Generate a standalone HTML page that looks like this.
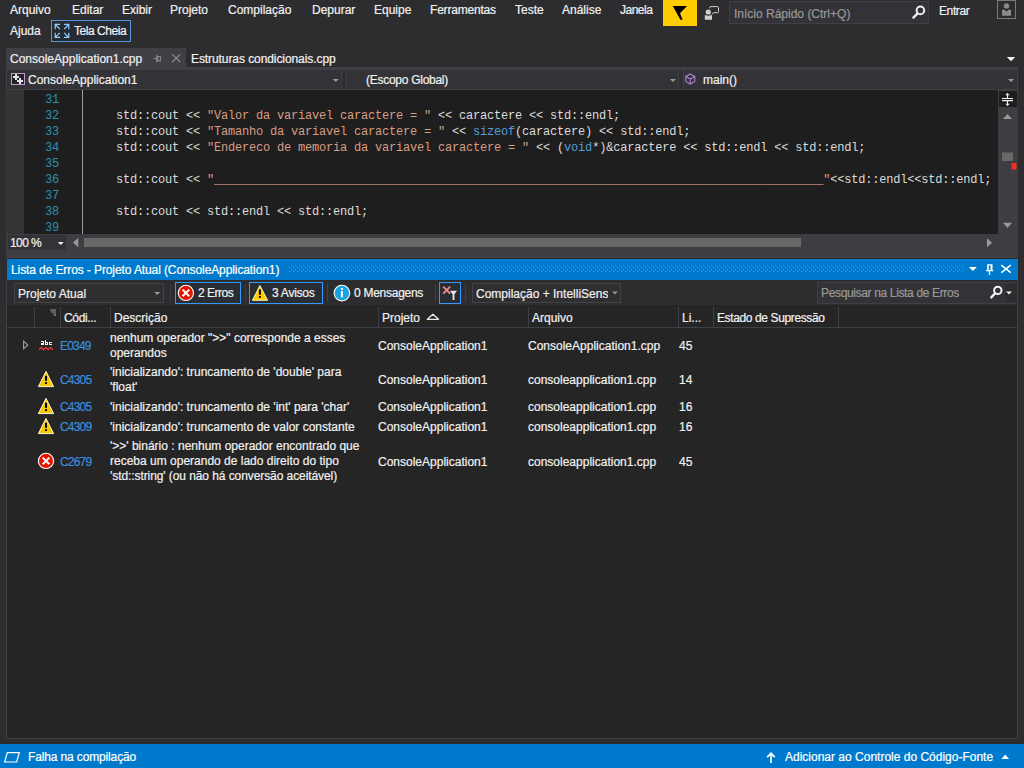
<!DOCTYPE html>
<html><head><meta charset="utf-8">
<style>
*{margin:0;padding:0;box-sizing:border-box}
html,body{width:1024px;height:768px;overflow:hidden;background:#2D2D30}
body{position:relative;font-family:"Liberation Sans",sans-serif;font-size:12px;color:#F1F1F1}
.a{position:absolute}
.t{position:absolute;white-space:nowrap;line-height:16px;height:16px;-webkit-text-stroke:0.2px currentColor}
.m{font-family:"Liberation Mono",monospace;font-size:12px;letter-spacing:-0.2px;color:#DCDCDC}
.s{color:#D69D85}
.k{color:#569CD6}
.ln{position:absolute;left:25px;width:34px;text-align:right;color:#2B91AF;font-family:"Liberation Mono",monospace;font-size:12px;letter-spacing:-0.2px;line-height:16px;white-space:nowrap}
.code{position:absolute;left:88px;white-space:pre;line-height:16px}
.sep{position:absolute;width:1px;background:#3F3F46}
.code-link{color:#3A8EDB}
</style></head>
<body>

<!-- Menu bar -->
<div class="t" style="left:10px;top:2px">Arquivo</div>
<div class="t" style="left:72px;top:2px">Editar</div>
<div class="t" style="left:122px;top:2px">Exibir</div>
<div class="t" style="left:170px;top:2px">Projeto</div>
<div class="t" style="left:228px;top:2px">Compilação</div>
<div class="t" style="left:312px;top:2px">Depurar</div>
<div class="t" style="left:374px;top:2px">Equipe</div>
<div class="t" style="left:430px;top:2px;letter-spacing:-0.2px">Ferramentas</div>
<div class="t" style="left:515px;top:2px">Teste</div>
<div class="t" style="left:562px;top:2px">Análise</div>
<div class="t" style="left:620px;top:2px;letter-spacing:-0.5px">Janela</div>
<div class="t" style="left:10px;top:23px">Ajuda</div>
<div class="a" style="left:51px;top:20px;width:80px;height:22px;border:1px solid #5597D8;background:#262B33"></div>
<svg class="a" style="left:52px;top:21px" width="20" height="20" viewBox="52 21 20 20">
<path d="M55.2 29.3 V24.4 H60.1 M55.2 24.4 L59.8 29" fill="none" stroke="#92CBFF" stroke-width="1.2"/>
<path d="M68.8 29.3 V24.4 H63.9 M68.8 24.4 L64.2 29" fill="none" stroke="#92CBFF" stroke-width="1.2"/>
<path d="M55.2 32.7 V37.4 H60.1 M55.2 37.4 L59.8 32.8" fill="none" stroke="#92CBFF" stroke-width="1.2"/>
<path d="M68.8 32.7 V37.4 H63.9 M68.8 37.4 L64.2 32.8" fill="none" stroke="#92CBFF" stroke-width="1.2"/>
</svg>
<div class="t" style="left:74px;top:23px;letter-spacing:-0.45px">Tela Cheia</div>

<!-- yellow flag -->
<div class="a" style="left:663px;top:0;width:34px;height:26px;background:#FFCC00"></div>
<svg class="a" style="left:663px;top:0" width="34" height="26" viewBox="663 0 34 26">
<path d="M672.8 6 L687 6 L680 13.2 L682.6 19.8 L680.4 19.8 Z" fill="#000"/>
</svg>
<!-- feedback icon -->
<svg class="a" style="left:703px;top:5px" width="18" height="16" viewBox="703 5 18 16">
<path d="M710.6 6.6 h7 a0.9 0.9 0 0 1 0.9 0.9 v4.3 a0.9 0.9 0 0 1 -0.9 0.9 h-4.2 l-1.8 2 v-2 h-1 a0.9 0.9 0 0 1 -0.9 -0.9 v-4.3 a0.9 0.9 0 0 1 0.9 -0.9 Z" fill="none" stroke="#D0D0D0" stroke-width="1"/>
<circle cx="708.3" cy="12" r="3.9" fill="#2D2D30"/>
<circle cx="708.3" cy="12" r="2.6" fill="#D0D0D0"/>
<path d="M704.8 15.2 h2.4 l1.1 1.2 l1.1 -1.2 h2.6 v4.6 h-7.2 Z" fill="#D0D0D0"/>
</svg>

<!-- quick launch -->
<div class="a" style="left:729px;top:1px;width:200px;height:23px;background:#333337;border:1px solid #3F3F46"></div>
<div class="t" style="left:734px;top:6px;color:#999999">Início Rápido (Ctrl+Q)</div>
<svg class="a" style="left:910px;top:4px" width="16" height="16" viewBox="910 4 16 16">
<circle cx="920.4" cy="10.4" r="3.8" fill="none" stroke="#F0F0F0" stroke-width="2"/>
<path d="M917.6 13.4 L913.4 17.6" stroke="#F0F0F0" stroke-width="2.4" stroke-linecap="round"/>
</svg>
<div class="t" style="left:939px;top:3px;letter-spacing:-0.4px">Entrar</div>
<div class="a" style="left:997px;top:0;width:19px;height:19px;border:1px solid #7A7A7A"></div>
<svg class="a" style="left:997px;top:0" width="19" height="19" viewBox="997 0 19 19">
<circle cx="1006.5" cy="5.9" r="2.7" fill="#8A8A8A"/>
<path d="M1002 9.8 h2.8 l1.7 2 l1.7 -2 h2.8 v6 h-9 Z" fill="#8A8A8A"/>
</svg>

<!-- tabs -->
<div class="a" style="left:6px;top:48px;width:180px;height:19px;background:#3F3F46"></div>
<div class="t" style="left:10px;top:51px">ConsoleApplication1.cpp</div>
<svg class="a" style="left:150px;top:52px" width="36" height="13" viewBox="150 52 36 13">
<path d="M153 58.5 h3.2 M156.6 54.8 v7.4" fill="none" stroke="#848484" stroke-width="1.2"/><path d="M157 56 h4 v5.4 h-4 Z M158.3 57.2 v3 h1.6 v-3 Z" fill="#848484" fill-rule="evenodd"/>
<path d="M172.2 54.4 L180.2 62 M180.2 54.4 L172.2 62" stroke="#8A8A8A" stroke-width="1.3"/>
</svg>
<div class="t" style="left:191px;top:51px;letter-spacing:-0.08px">Estruturas condicionais.cpp</div>
<svg class="a" style="left:1005px;top:55px" width="12" height="8" viewBox="1005 55 12 8">
<path d="M1006.8 57 L1015.2 57 L1011 61.3 Z" fill="#F1F1F1"/>
</svg>

<!-- nav bar -->
<div class="a" style="left:6px;top:67px;width:1012px;height:23px;background:#3F3F46"></div>
<div class="a" style="left:7px;top:70px;width:1010px;height:19px;background:#333337"></div>
<div class="a" style="left:341px;top:70px;width:1px;height:19px;background:#3F3F46"></div>
<div class="a" style="left:346px;top:70px;width:1px;height:19px;background:#3F3F46"></div>
<div class="a" style="left:342px;top:70px;width:4px;height:19px;background:#2F2F33"></div>
<div class="a" style="left:678px;top:70px;width:1px;height:19px;background:#3F3F46"></div>
<div class="a" style="left:683px;top:70px;width:1px;height:19px;background:#3F3F46"></div>
<div class="a" style="left:679px;top:70px;width:4px;height:19px;background:#2F2F33"></div>
<svg class="a" style="left:10px;top:72px" width="17" height="15" viewBox="10 72 17 15">
<rect x="11.5" y="73.5" width="13" height="11" fill="#232326" stroke="#C39BC6" stroke-width="1"/>
<path d="M13 76 h6 v2 h-6 Z M15 74 h2 v6 h-2 Z M17 80 h6 v2 h-6 Z M19 78 h2 v6 h-2 Z" fill="#E6E6E6"/>
</svg>
<div class="t" style="left:28px;top:72px">ConsoleApplication1</div>
<svg class="a" style="left:330px;top:77px" width="10" height="7" viewBox="330 77 10 7">
<path d="M332.8 79 L338.8 79 L335.8 82 Z" fill="#999"/>
</svg>
<div class="t" style="left:366px;top:72px;letter-spacing:-0.27px">(Escopo Global)</div>
<svg class="a" style="left:667px;top:77px" width="10" height="7" viewBox="667 77 10 7">
<path d="M670 79 L676 79 L673 82 Z" fill="#999"/>
</svg>
<svg class="a" style="left:684px;top:72px" width="13" height="14" viewBox="684 72 13 14">
<path d="M690.3 73.9 L694.8 76.4 L694.8 81.5 L690.3 84 L685.8 81.5 L685.8 76.4 Z M685.8 76.4 L690.3 79 L694.8 76.4 M690.3 79 V84" fill="none" stroke="#B180D7" stroke-width="1.1"/>
</svg>
<div class="t" style="left:703px;top:72px">main()</div>
<svg class="a" style="left:1006px;top:77px" width="10" height="7" viewBox="1006 77 10 7">
<path d="M1008 79 L1014 79 L1011 82 Z" fill="#999"/>
</svg>

<!-- editor -->
<div class="a" style="left:7px;top:90px;width:991px;height:144px;background:#1E1E1E"></div>
<div class="a" style="left:7px;top:90px;width:17px;height:144px;background:#333333"></div>
<div class="a" style="left:82px;top:90px;width:1px;height:144px;background:#9B9B9B"></div>

<!-- code -->
<div class="ln" style="top:92px">31</div>
<div class="ln" style="top:108px">32</div>
<div class="code m" style="top:108px">    std::cout &lt;&lt; <span class="s">"Valor da variavel caractere = "</span> &lt;&lt; caractere &lt;&lt; std::endl;</div>
<div class="ln" style="top:124px">33</div>
<div class="code m" style="top:124px">    std::cout &lt;&lt; <span class="s">"Tamanho da variavel caractere = "</span> &lt;&lt; <span class="k">sizeof</span>(caractere) &lt;&lt; std::endl;</div>
<div class="ln" style="top:140px">34</div>
<div class="code m" style="top:140px">    std::cout &lt;&lt; <span class="s">"Endereco de memoria da variavel caractere = "</span> &lt;&lt; (<span class="k">void</span>*)&amp;caractere &lt;&lt; std::endl &lt;&lt; std::endl;</div>
<div class="ln" style="top:156px">35</div>
<div class="ln" style="top:172px">36</div>
<div class="code m" style="top:172px">    std::cout &lt;&lt; <span class="s">"_______________________________________________________________________________________"</span>&lt;&lt;std::endl&lt;&lt;std::endl;</div>
<div class="ln" style="top:188px">37</div>
<div class="ln" style="top:204px">38</div>
<div class="code m" style="top:204px">    std::cout &lt;&lt; std::endl &lt;&lt; std::endl;</div>
<div class="ln" style="top:220px">39</div>

<!-- v scrollbar -->
<div class="a" style="left:998px;top:90px;width:20px;height:144px;background:#3E3E42"></div>
<div class="a" style="left:999px;top:91px;width:18px;height:16px;background:#1E1E1E"></div>
<svg class="a" style="left:999px;top:91px" width="18" height="16" viewBox="999 91 18 16">
<path d="M1002 98.5 h11 M1002 100.6 h11 M1007.5 93.5 v5 M1007.5 100.6 v5" stroke="#F1F1F1" stroke-width="1.1" fill="none"/>
<path d="M1005.3 95.3 L1007.5 93 L1009.7 95.3 Z M1005.3 103.7 L1007.5 106 L1009.7 103.7 Z" fill="#F1F1F1"/>
</svg>
<svg class="a" style="left:998px;top:108px" width="20" height="126" viewBox="998 108 20 126">
<path d="M1003 119 L1012 119 L1007.5 114 Z" fill="#999999"/>
<rect x="1002" y="152.5" width="11" height="8.5" fill="#686868"/>
<rect x="1011.5" y="163" width="5" height="6.5" fill="#F2301C"/>
<path d="M1003 222.8 L1012 222.8 L1007.5 228 Z" fill="#999999"/>
</svg>

<!-- h scroll -->
<div class="a" style="left:7px;top:234px;width:1011px;height:24px;background:#3E3E42"></div>
<div class="a" style="left:8px;top:235px;width:58px;height:15px;background:#333337"></div>
<div class="t" style="left:10px;top:235px;letter-spacing:-0.6px">100 %</div>
<svg class="a" style="left:56px;top:240px" width="10" height="7" viewBox="56 240 10 7">
<path d="M57.8 242 L63.8 242 L60.8 245 Z" fill="#F1F1F1"/>
</svg>
<svg class="a" style="left:70px;top:236px" width="10" height="13" viewBox="70 236 10 13">
<path d="M78.3 238 L78.3 247.3 L72.8 242.6 Z" fill="#999999"/>
</svg>
<div class="a" style="left:84px;top:238px;width:717px;height:9px;background:#686868"></div>
<svg class="a" style="left:985px;top:236px" width="10" height="13" viewBox="985 236 10 13">
<path d="M987 238.3 L987 247.3 L992 242.8 Z" fill="#999999"/>
</svg>

<div class="a" style="left:6px;top:90px;width:1px;height:169px;background:#3A3A3E"></div>
<div class="a" style="left:1017px;top:90px;width:1px;height:169px;background:#3A3A3E"></div>
<!-- error list title -->
<div class="a" style="left:7px;top:259px;width:1011px;height:21px;background:#007ACC"></div>
<div class="t" style="left:11px;top:262px;color:#fff;letter-spacing:-0.1px">Lista de Erros - Projeto Atual (ConsoleApplication1)</div>
<svg class="a" style="left:288px;top:263px" width="676" height="10" viewBox="288 263 676 10">
<defs><pattern id="grip" x="289" y="267" width="4" height="4" patternUnits="userSpaceOnUse">
<rect x="0" y="0" width="1" height="1" fill="#3A97DC"/><rect x="2" y="2" width="1" height="1" fill="#3A97DC"/></pattern></defs>
<rect x="288" y="264" width="676" height="8" fill="url(#grip)"/>
</svg>
<svg class="a" style="left:966px;top:262px" width="50" height="15" viewBox="966 262 50 15">
<path d="M968.9 267 L976.9 267 L972.9 271 Z" fill="#fff"/>
<path d="M987.2 264.2 h5.3 v6.2 h-5.3 Z M988.8 265.6 v4.8 h1.7 v-4.8 Z" fill="#fff" fill-rule="evenodd"/>
<path d="M986 270.6 h7.2 M989.5 271 v4" stroke="#fff" stroke-width="1.2"/>
<path d="M1001.3 265.2 L1010.7 272.6 M1010.7 265.2 L1001.3 272.6" stroke="#fff" stroke-width="1.5"/>
</svg>

<!-- toolbar -->
<div class="a" style="left:7px;top:280px;width:1010px;height:25px;background:#2D2D30"></div>
<div class="a" style="left:14px;top:283px;width:150px;height:20px;background:#2F2F32;border:1px solid #434346"></div>
<div class="t" style="left:18px;top:286px">Projeto Atual</div>
<svg class="a" style="left:150px;top:290px" width="10" height="6" viewBox="150 290 10 6">
<path d="M154.2 292 L160.2 292 L157.2 295 Z" fill="#999"/>
</svg>
<div class="a" style="left:170px;top:284px;width:1px;height:18px;background:#3F3F46"></div>
<div class="a" style="left:175px;top:282px;width:66px;height:22px;border:1px solid #3399FF;background:#2A2D33"></div>
<svg class="a" style="left:177px;top:284px" width="18" height="18" viewBox="177 284 18 18">
<circle cx="185.9" cy="292.9" r="7.6" fill="#E51400" stroke="#fff" stroke-width="1.1"/>
<path d="M182.6 289.6 L189.2 296.2 M189.2 289.6 L182.6 296.2" stroke="#fff" stroke-width="2"/>
</svg>
<div class="t" style="left:198px;top:285px;letter-spacing:-0.5px">2 Erros</div>
<div class="a" style="left:245px;top:284px;width:1px;height:18px;background:#3F3F46"></div>
<div class="a" style="left:249px;top:282px;width:74px;height:22px;border:1px solid #3399FF;background:#2A2D33"></div>
<svg class="a" style="left:251px;top:284px" width="18" height="18" viewBox="251 284 18 18">
<path d="M259.9 285.6 L267.6 300.3 L252.4 300.3 Z" fill="#FFCC00" stroke="#FFF6C0" stroke-width="1" stroke-linejoin="round"/>
<rect x="258.9" y="289.4" width="2" height="5.4" fill="#000"/>
<rect x="258.9" y="296" width="2" height="1.8" fill="#000"/>
</svg>
<div class="t" style="left:272px;top:285px;letter-spacing:-0.25px">3 Avisos</div>
<div class="a" style="left:327px;top:284px;width:1px;height:18px;background:#3F3F46"></div>
<svg class="a" style="left:332px;top:284px" width="20" height="18" viewBox="332 284 20 18">
<circle cx="341.9" cy="293.1" r="7.8" fill="#1BA1E2" stroke="#fff" stroke-width="1.1"/>
<rect x="340.9" y="291" width="2" height="6.3" fill="#fff"/>
<rect x="340.9" y="288" width="2" height="1.9" fill="#fff"/>
</svg>
<div class="t" style="left:354px;top:285px;letter-spacing:-0.27px">0 Mensagens</div>
<div class="a" style="left:435px;top:284px;width:1px;height:18px;background:#3F3F46"></div>
<div class="a" style="left:439px;top:282px;width:22px;height:22px;border:1px solid #3399FF;background:#2A2D33"></div>
<svg class="a" style="left:440px;top:283px" width="20" height="20" viewBox="440 283 20 20">
<path d="M443.2 286.6 L450.2 293.6 M450.2 286.6 L443.2 293.6" stroke="#F28A8A" stroke-width="1.8"/>
<path d="M450 290.8 h7 l-2.6 3.4 v5.8 h-1.8 v-5.8 Z" fill="#E8E8E8"/>
</svg>
<div class="a" style="left:465px;top:284px;width:1px;height:18px;background:#3F3F46"></div>
<div class="a" style="left:472px;top:283px;width:149px;height:20px;background:#2F2F32;border:1px solid #434346"></div>
<div class="t" style="left:476px;top:286px;width:132px;overflow:hidden">Compilação + IntelliSense</div>
<svg class="a" style="left:609px;top:290px" width="10" height="6" viewBox="609 290 10 6">
<path d="M612 291.5 L618 291.5 L615 294.5 Z" fill="#999"/>
</svg>
<div class="a" style="left:817px;top:282px;width:200px;height:22px;background:#333337;border:1px solid #3F3F46;border-right:none"></div>
<div class="t" style="left:821px;top:285px;color:#999;letter-spacing:-0.35px">Pesquisar na Lista de Erros</div>
<svg class="a" style="left:985px;top:284px" width="32" height="18" viewBox="985 284 32 18">
<rect x="1005.5" y="283" width="11.5" height="20" fill="#2D2D30"/>
<circle cx="997.8" cy="290.4" r="3.7" fill="none" stroke="#F0F0F0" stroke-width="2"/>
<path d="M995.2 293.2 L991.3 297.4" stroke="#F0F0F0" stroke-width="2.4" stroke-linecap="round"/>
<path d="M1006 291.5 L1012 291.5 L1009 294.5 Z" fill="#F0F0F0"/>
</svg>

<!-- header -->
<div class="a" style="left:7px;top:305px;width:1010px;height:433px;background:#252526"></div>
<div class="a" style="left:7px;top:327px;width:1010px;height:1px;background:#3F3F46"></div>

<div class="a" style="left:34px;top:307px;width:1px;height:20px;background:#3F3F46"></div>
<div class="a" style="left:60px;top:307px;width:1px;height:20px;background:#3F3F46"></div>
<div class="a" style="left:110px;top:307px;width:1px;height:20px;background:#3F3F46"></div>
<div class="a" style="left:378px;top:307px;width:1px;height:20px;background:#3F3F46"></div>
<div class="a" style="left:528px;top:307px;width:1px;height:20px;background:#3F3F46"></div>
<div class="a" style="left:678px;top:307px;width:1px;height:20px;background:#3F3F46"></div>
<div class="a" style="left:713px;top:307px;width:1px;height:20px;background:#3F3F46"></div>
<div class="a" style="left:838px;top:307px;width:1px;height:20px;background:#3F3F46"></div>
<svg class="a" style="left:48px;top:308px" width="10" height="9" viewBox="48 308 10 9">
<path d="M50 310 h6 M51 312 h5 M53 314 h3 M54.5 315.5 h1.5" stroke="#999" stroke-width="1"/>
</svg>
<div class="t" style="left:64px;top:310px;;letter-spacing:-0.35px">Códi...</div>
<div class="t" style="left:114px;top:310px;">Descrição</div>
<div class="t" style="left:382px;top:310px;">Projeto</div>
<svg class="a" style="left:424px;top:310px" width="18" height="10" viewBox="424 310 18 10">
<path d="M427.3 319.3 L432.9 314.3 L438.5 319.3 Z" fill="none" stroke="#E8E8E8" stroke-width="1.3" stroke-linejoin="round"/>
</svg>
<div class="t" style="left:532px;top:310px;">Arquivo</div>
<div class="t" style="left:682px;top:310px;">Li...</div>
<div class="t" style="left:717px;top:310px;;letter-spacing:-0.38px">Estado de Supressão</div>
<svg class="a" style="left:20px;top:338px" width="36" height="14" viewBox="20 338 36 14">
<path d="M23.6 341.2 L27.8 345 L23.6 348.8 Z" fill="none" stroke="#A0A0A0" stroke-width="1.1"/>
<rect x="41" y="341" width="3" height="1" fill="#F0F0F0"/><rect x="43" y="341" width="1" height="4" fill="#F0F0F0"/><rect x="41" y="343" width="2" height="1" fill="#F0F0F0"/><rect x="41" y="343" width="1" height="2" fill="#F0F0F0"/><rect x="41" y="344" width="3" height="1" fill="#F0F0F0"/><rect x="45" y="340" width="1" height="5" fill="#F0F0F0"/><rect x="45" y="342" width="3" height="1" fill="#F0F0F0"/><rect x="47" y="342" width="1" height="3" fill="#F0F0F0"/><rect x="45" y="344" width="3" height="1" fill="#F0F0F0"/><rect x="49" y="342" width="3" height="1" fill="#F0F0F0"/><rect x="49" y="342" width="1" height="3" fill="#F0F0F0"/><rect x="49" y="344" width="3" height="1" fill="#F0F0F0"/>
<path d="M39 349.8 L41.3 347.4 L43.6 349.8 L45.9 347.4 L48.2 349.8 L50.5 347.4 L52.8 349.8" fill="none" stroke="#E0383A" stroke-width="1.4"/>
</svg>
<svg class="a" style="left:36px;top:369px" width="20" height="20" viewBox="36 369 20 20">
<path d="M46 371.4 L53.6 386.6 L38.4 386.6 Z" fill="#F4C800" stroke="#FFF8D0" stroke-width="1" stroke-linejoin="round"/>
<rect x="45" y="375.8" width="2" height="5" fill="#000"/>
<rect x="45" y="382.2" width="2" height="1.8" fill="#000"/>
</svg>
<svg class="a" style="left:36px;top:396px" width="20" height="20" viewBox="36 396 20 20">
<path d="M46 398.4 L53.6 413.6 L38.4 413.6 Z" fill="#F4C800" stroke="#FFF8D0" stroke-width="1" stroke-linejoin="round"/>
<rect x="45" y="402.8" width="2" height="5" fill="#000"/>
<rect x="45" y="409.2" width="2" height="1.8" fill="#000"/>
</svg>
<svg class="a" style="left:36px;top:416px" width="20" height="20" viewBox="36 416 20 20">
<path d="M46 418.4 L53.6 433.6 L38.4 433.6 Z" fill="#F4C800" stroke="#FFF8D0" stroke-width="1" stroke-linejoin="round"/>
<rect x="45" y="422.8" width="2" height="5" fill="#000"/>
<rect x="45" y="429.2" width="2" height="1.8" fill="#000"/>
</svg>
<svg class="a" style="left:36px;top:451px" width="20" height="20" viewBox="36 451 20 20">
<circle cx="46" cy="460.9" r="7.6" fill="#E51400" stroke="#fff" stroke-width="1.1"/>
<path d="M42.7 457.6 L49.3 464.2 M49.3 457.6 L42.7 464.2" stroke="#fff" stroke-width="2"/>
</svg>
<div class="t" style="left:60px;top:338px;color:#3A8EDB;letter-spacing:-0.8px">E0349</div>
<div class="t" style="left:110px;top:330px;">nenhum operador "&gt;&gt;" corresponde a esses</div>
<div class="t" style="left:110px;top:345px;">operandos</div>
<div class="t" style="left:378px;top:338px;">ConsoleApplication1</div>
<div class="t" style="left:528px;top:338px;">ConsoleApplication1.cpp</div>
<div class="t" style="left:679px;top:338px;">45</div>
<div class="t" style="left:60px;top:372px;color:#3A8EDB;letter-spacing:-0.8px">C4305</div>
<div class="t" style="left:110px;top:364px;">'inicializando': truncamento de 'double' para</div>
<div class="t" style="left:110px;top:379px;">'float'</div>
<div class="t" style="left:378px;top:372px;">ConsoleApplication1</div>
<div class="t" style="left:528px;top:372px;">consoleapplication1.cpp</div>
<div class="t" style="left:679px;top:372px;">14</div>
<div class="t" style="left:60px;top:399px;color:#3A8EDB;letter-spacing:-0.8px">C4305</div>
<div class="t" style="left:110px;top:399px;">'inicializando': truncamento de 'int' para 'char'</div>
<div class="t" style="left:378px;top:399px;">ConsoleApplication1</div>
<div class="t" style="left:528px;top:399px;">consoleapplication1.cpp</div>
<div class="t" style="left:679px;top:399px;">16</div>
<div class="t" style="left:60px;top:419px;color:#3A8EDB;letter-spacing:-0.8px">C4309</div>
<div class="t" style="left:110px;top:419px;">'inicializando': truncamento de valor constante</div>
<div class="t" style="left:378px;top:419px;">ConsoleApplication1</div>
<div class="t" style="left:528px;top:419px;">consoleapplication1.cpp</div>
<div class="t" style="left:679px;top:419px;">16</div>
<div class="t" style="left:60px;top:454px;color:#3A8EDB;letter-spacing:-0.8px">C2679</div>
<div class="t" style="left:110px;top:438px;">'&gt;&gt;' binário : nenhum operador encontrado que</div>
<div class="t" style="left:110px;top:453px;">receba um operando de lado direito do tipo</div>
<div class="t" style="left:110px;top:468px;;letter-spacing:-0.08px">'std::string' (ou não há conversão aceitável)</div>
<div class="t" style="left:378px;top:454px;">ConsoleApplication1</div>
<div class="t" style="left:528px;top:454px;">consoleapplication1.cpp</div>
<div class="t" style="left:679px;top:454px;">45</div>

<!-- list border -->
<div class="a" style="left:6px;top:280px;width:1px;height:459px;background:#3F3F46"></div>
<div class="a" style="left:1017px;top:280px;width:1px;height:459px;background:#3F3F46"></div>
<div class="a" style="left:6px;top:738px;width:1012px;height:1px;background:#3F3F46"></div>

<!-- status bar -->
<div class="a" style="left:0;top:744px;width:1024px;height:24px;background:#007ACC"></div>
<svg class="a" style="left:2px;top:750px" width="22" height="15" viewBox="2 750 22 15">
<path d="M7.3 752.7 L19.3 752.7 L16.6 762 L4.6 762 Z" fill="none" stroke="#fff" stroke-width="1.2"/>
</svg>
<div class="t" style="left:28px;top:749px;color:#fff;letter-spacing:-0.14px">Falha na compilação</div>
<svg class="a" style="left:764px;top:750px" width="14" height="15" viewBox="764 750 14 15">
<path d="M771 763 V753.6 M767.2 757.2 L771 753.2 L774.8 757.2" fill="none" stroke="#fff" stroke-width="1.7"/>
</svg>
<div class="t" style="left:785px;top:749px;color:#fff">Adicionar ao Controle do Código-Fonte</div>
<svg class="a" style="left:1000px;top:752px" width="12" height="9" viewBox="1000 752 12 9">
<path d="M1001.5 759 L1009 759 L1005.25 754.5 Z" fill="#fff"/>
</svg>
</body></html>
